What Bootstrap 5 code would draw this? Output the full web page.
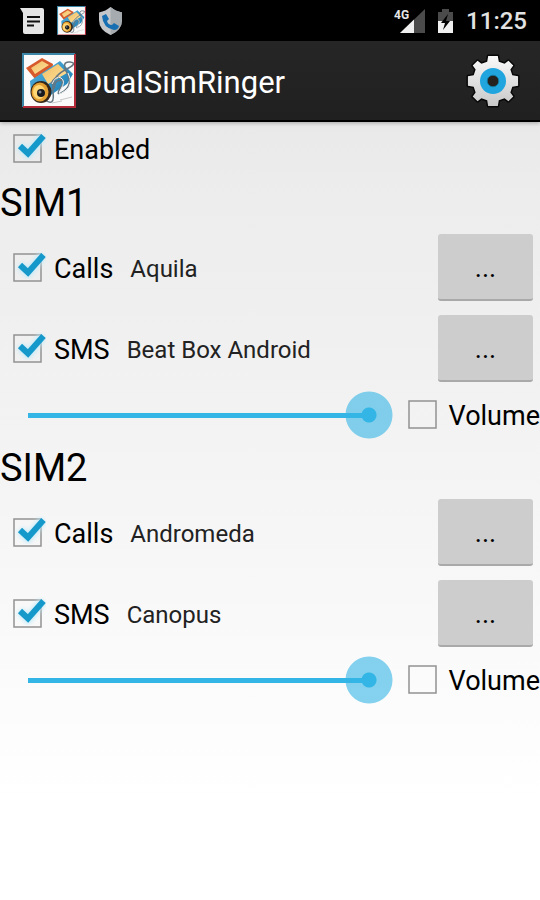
<!DOCTYPE html>
<html lang="en">
<head>
<meta charset="utf-8">
<meta name="viewport" content="width=device-width, initial-scale=1">
<title>DualSimRinger</title>
<link href="https://cdn.jsdelivr.net/npm/bootstrap@5.3.0/dist/css/bootstrap.min.css" rel="stylesheet">
<style>
body { font-family: Roboto, sans-serif; color: #000; font-size: 27px; line-height: 32px; background: linear-gradient(#e9e9e9 120px, #ededed 200px, #efefef 300px, #f5f5f5 500px, #fff 800px) no-repeat #fff; min-height: 100vh; }
.status-bar { height: 41px; background: #000; color: #e2e2e2; padding: 0 13px 0 20px; }
.clock { font-size: 24px; font-weight: 500; }
.battery { margin: 0 12px; }
.app-bar { height: 81px; padding: 0 20px 0 21px; background: linear-gradient(#262626, #202020); border-bottom: 2px solid #000; box-shadow: 0 1px 4px rgba(0,0,0,.3); }
.app-title { font-size: 31px; line-height: 40px; color: #fff; font-weight: 400; margin-left: 5px; padding-top: 4px; }
.settings-btn { line-height: 0; }
.enabled-row { height: 54px; padding-left: 12px; }
.sim-title { font-size: 38px; line-height: 47px; padding-top: 4px; font-weight: 400; }
.tone-row { height: 81px; padding: 0 7px 0 12px; }
.volume-row { height: 52px; padding-left: 4px; }
.tick { appearance: none; flex: none; width: 34px; height: 34px; margin: 0; background: url("data:image/svg+xml,%3Csvg xmlns='http://www.w3.org/2000/svg' viewBox='0 0 34 34'%3E%3Crect x='2' y='3' width='27' height='27' fill='none' stroke='%23929292' stroke-width='1.5'/%3E%3C/svg%3E") center / 34px no-repeat; }
.tick:checked { background-image: url("data:image/svg+xml,%3Csvg xmlns='http://www.w3.org/2000/svg' viewBox='0 0 34 34'%3E%3Cdefs%3E%3Cfilter id='b' x='-30%25' y='-30%25' width='160%25' height='160%25'%3E%3CfeGaussianBlur stdDeviation='2'/%3E%3C/filter%3E%3C/defs%3E%3Crect x='2' y='3' width='27' height='27' fill='none' stroke='%23929292' stroke-width='1.5'/%3E%3Cpath d='M8 14l8 8L31 4' fill='none' stroke='%23bfeaf9' stroke-width='8' filter='url(%23b)'/%3E%3Cpath d='M8 14l8 7.5L31.500 4' fill='none' stroke='%231598ca' stroke-width='6'/%3E%3C/svg%3E"); }
.tick-label { margin-left: 8px; padding-top: 2px; }
.volume-label { margin-left: 8px; padding-top: 2px; }
.tone { font-size: 24px; color: #222; margin-left: 17px; padding-top: 2px; }
.pick { width: 95px; height: 67px; padding: 3px 0 0; font-size: 27px; line-height: 32px; color: #000; background: #cdcdcd; border: 0; border-bottom: 2px solid #a9a9a9; border-radius: 3px; }
.pick:hover { background: #c4c4c4; }
.level { height: 48px; min-width: 0; margin-right: 14px; }
.level::-webkit-slider-runnable-track { height: 48px; background: linear-gradient(#33b5e5, #33b5e5) center / calc(100% - 48px) 5px no-repeat; }
.level::-webkit-slider-thumb { width: 48px; height: 48px; margin: 0; border-radius: 50%; background: radial-gradient(circle, #33b5e5 7px, rgba(51,181,229,.6) 8px, rgba(51,181,229,.6) 23px, transparent 24px) !important; }
</style>
</head>
<body>
<div class="status-bar d-flex align-items-center justify-content-between">
  <div class="d-flex align-items-center">
    <svg width="25" height="28" viewBox="0 0 25 28" aria-hidden="true"><path d="M0 1h22q2 0 2 2v22q0 2-2 2H5q-2 0-2-2V6z" fill="#e6e6e6"/><path d="M7 10h13M7 14.500h13M7 18.500h7" stroke="#111" stroke-width="2"/></svg>
    <svg class="ms-2 me-2" width="37" height="29" viewBox="-2 0 60 54" aria-hidden="true"><use href="#ringer"/></svg>
    <svg width="25" height="30" viewBox="0 0 25 30" aria-hidden="true"><path d="M12.500 1Q17 5 24 6.500V14q0 10-11.500 15Q1 24 1 14V6.500Q8 5 12.500 1z" fill="#c4c6c9"/><path d="M12.500 1Q17 5 24 6.500V14q0 10-11.500 15z" fill="#a6abb0"/><path d="M4 10l4-2 3 5-2 2q1 4 5 4l2-2 5 3q-1 4-5 4Q5 22 4 10z" fill="#176fb1"/></svg>
  </div>
  <div class="d-flex align-items-center">
    <svg width="31" height="28" viewBox="0 0 31 28" aria-hidden="true"><path d="M31 2v24H6z" fill="#4b4b4b"/><path d="M20 12.500V26H6z" fill="#f0f0f0"/><text x="0" y="12" font-family="Roboto, sans-serif" font-size="12" font-weight="700" fill="#e6e6e6" stroke="#000" stroke-width="2" paint-order="stroke">4G</text></svg>
    <svg class="battery" width="17" height="26" viewBox="0 0 17 26" aria-hidden="true"><path d="M1 4h4V1h7v3h4v9H1z" fill="#4b4b4b"/><path d="M1 13h15v12H1z" fill="#f0f0f0"/><path d="M11 6l-7 9h4l-2 7 7-9H9z" fill="#000"/></svg>
    <span class="clock">11:25</span>
  </div>
</div>
<header class="app-bar d-flex align-items-center">
  <svg width="56" height="56" viewBox="0 0 56 56" aria-hidden="true">
    <defs><clipPath id="frame"><path d="M1 0h54v55H1z"/></clipPath><linearGradient id="bluesim" x2="1" y2="1"><stop stop-color="#55b5e2"/><stop offset="1" stop-color="#1776ac"/></linearGradient><linearGradient id="gold" x2="1" y2="1"><stop stop-color="#f0bd65"/><stop offset="1" stop-color="#ffe49d"/></linearGradient></defs>
    <g id="ringer" clip-path="url(#frame)">
      <path d="M2 1h52v53H2z" fill="#fafafa"/>
      <path d="M2 54V1h52" fill="none" stroke="#3c87a7" stroke-width="2"/><path d="M54 1v53H2" fill="none" stroke="#b32a38" stroke-width="2"/>
      <path d="M5 15L21 5l11 6-1 8-17 7z" fill="#d65a2b"/><path d="M10 15l11-7 7 4-14 9z" fill="url(#gold)"/>
      <path d="M9 28L39 8l13 13-6 10-22 15-14-6z" fill="url(#bluesim)"/><path d="M21 21l16-10 9 9-19 11z" fill="url(#gold)"/>
      <path d="M30 31q4-9 9-6t0 11 4 2 3-18 3-11-5 8-12 22-8 8 0-8 10-7 9-4" fill="none" stroke="#667681" stroke-width="1.500"/><path d="M31 31q4-9 9-6t0 11 4 2 3-18" fill="none" stroke="#edf0f2"/>
      <path d="M39 47l12-3M31 50l10-2" stroke="#c8c8c8"/>
      <ellipse cx="20" cy="39" rx="10.500" ry="11" fill="#342619"/><ellipse cx="19" cy="39" rx="8.500" ry="9.500" fill="#e5a032"/><ellipse cx="18" cy="39" rx="6" ry="7" fill="#ffd774"/><circle cx="20" cy="40" r="4" fill="#18191d"/><circle cx="19" cy="39" r="1.500" fill="#7c8793"/>
    </g>
  </svg>
  <h1 class="app-title mb-0">DualSimRinger</h1>
  <button class="settings-btn btn p-0 border-0 ms-auto" type="button" aria-label="Settings">
    <svg width="54" height="54" viewBox="-28 -28 56 56"><defs><linearGradient id="metal" x2="0" y2="1"><stop stop-color="#fafafa"/><stop offset="1" stop-color="#c8c8c8"/></linearGradient></defs>
      <path d="M-5-26H5L6-20L12-18L16-21L21-16L18-12L20-6L26-5V5L20 6L18 12L21 16L16 21L12 18L6 20L5 26H-5L-6 20L-12 18L-16 21L-21 16L-18 12L-20 6L-26 5V-5L-20-6L-18-12L-21-16L-16-21L-12-18L-6-20Z" stroke="#080808" stroke-width="3" stroke-linejoin="round" paint-order="stroke" fill="url(#metal)"/>
      <circle r="13.500" fill="#20a5df"/><circle r="6" fill="#24211f" stroke="#13799f"/></svg>
  </button>
</header>
<main>
  <div class="enabled-row d-flex align-items-center">
    <input class="tick" type="checkbox" id="enabled" checked><label class="tick-label" for="enabled">Enabled</label>
  </div>
  <section aria-labelledby="sim1">
    <h2 class="sim-title mb-0" id="sim1">SIM1</h2>
    <div class="tone-row d-flex align-items-center">
      <input class="tick" type="checkbox" id="calls1" checked><label class="tick-label" for="calls1">Calls</label>
      <span class="tone">Aquila</span><button class="pick ms-auto" type="button">...</button>
    </div>
    <div class="tone-row d-flex align-items-center">
      <input class="tick" type="checkbox" id="sms1" checked><label class="tick-label" for="sms1">SMS</label>
      <span class="tone">Beat Box Android</span><button class="pick ms-auto" type="button">...</button>
    </div>
    <div class="volume-row d-flex align-items-center">
      <input class="level form-range flex-fill" type="range" min="0" max="100" value="100" aria-label="SIM1 volume level">
      <input class="tick" type="checkbox" id="volume1"><label class="volume-label" for="volume1">Volume</label>
    </div>
  </section>
  <section aria-labelledby="sim2">
    <h2 class="sim-title mb-0" id="sim2">SIM2</h2>
    <div class="tone-row d-flex align-items-center">
      <input class="tick" type="checkbox" id="calls2" checked><label class="tick-label" for="calls2">Calls</label>
      <span class="tone">Andromeda</span><button class="pick ms-auto" type="button">...</button>
    </div>
    <div class="tone-row d-flex align-items-center">
      <input class="tick" type="checkbox" id="sms2" checked><label class="tick-label" for="sms2">SMS</label>
      <span class="tone">Canopus</span><button class="pick ms-auto" type="button">...</button>
    </div>
    <div class="volume-row d-flex align-items-center">
      <input class="level form-range flex-fill" type="range" min="0" max="100" value="100" aria-label="SIM2 volume level">
      <input class="tick" type="checkbox" id="volume2"><label class="volume-label" for="volume2">Volume</label>
    </div>
  </section>
</main>
<script src="https://cdn.jsdelivr.net/npm/bootstrap@5.3.0/dist/js/bootstrap.bundle.min.js"></script>
</body>
</html>
